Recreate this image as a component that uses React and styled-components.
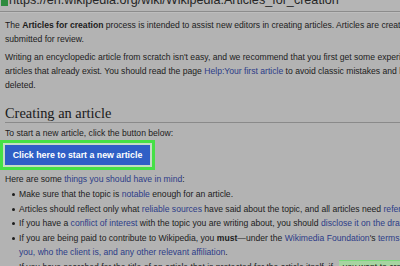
import styled, { createGlobalStyle } from "styled-components";

const Global = createGlobalStyle`
  html, body {
    margin: 0;
    padding: 0;
    background: #b3b3b3;
    overflow: hidden;
  }
  body {
    width: 400px;
    height: 266px;
    font-family: "Liberation Sans", Arial, sans-serif;
    color: #1c1c1c;
  }
`;

const Page = styled.div`
  width: 400px;
  height: 266px;
  overflow: hidden;
`;

const UrlBar = styled.div`
  height: 11px;
  border-bottom: 1px solid #8c8c8c;
  box-shadow: 0 1px 0 #bdbdbd;
  display: flex;
  align-items: flex-start;
  gap: 1px;
  padding-left: 1px;
  overflow: hidden;
  background: #b5b5b5;
`;

const Lock = styled.svg`
  flex: none;
  margin-top: -2px;
`;

const Url = styled.span`
  font-size: 12.6px;
  line-height: 13px;
  margin-top: -6px;
  white-space: nowrap;
  color: #262626;
`;

const Content = styled.div`
  padding-left: 5px;
  width: 600px;
`;

const Para = styled.p`
  margin: ${(p) => p.$top || 0}px 0 0;
  font-size: 8.6px;
  line-height: 14px;
  white-space: nowrap;
`;

const Link = styled.span`
  color: #2c3c88;
`;

const Heading = styled.h2`
  margin: 12px 0 0;
  width: 395px;
  font-family: "Liberation Serif", Georgia, serif;
  font-weight: normal;
  font-size: 14.4px;
  line-height: 18px;
  color: #1a1a1a;
  border-bottom: 1px solid #8a8a8a;
`;

const Highlight = styled.div`
  display: inline-flex;
  margin: 0 0 0 -5px;
  border: 3px solid #45e045;
  padding: 2px;
  background: #c4dcc4;
`;

const Button = styled.div`
  width: 145px;
  height: 20px;
  background: #2f5fc6;
  color: #fff;
  font-weight: bold;
  font-size: 8.8px;
  display: flex;
  align-items: center;
  justify-content: center;
  white-space: nowrap;
`;

const List = styled.ul`
  margin: 1px 0 0;
  padding: 0 0 0 14px;
  list-style: none;
`;

const Item = styled.li`
  position: relative;
  font-size: 8.6px;
  line-height: 14.5px;
  white-space: nowrap;
  &::before {
    content: "";
    position: absolute;
    left: -7px;
    top: 6px;
    width: 3px;
    height: 3px;
    border-radius: 50%;
    background: #1c1c1c;
  }
`;

const Marked = styled.span`
  display: inline-block;
  margin-left: 6px;
  padding: 0 4px;
  background: #a6d4a0;
  box-shadow: inset 0 1px 0 #7cd87c;
`;

export default function App() {
  return (
    <Page>
      <Global />
      <UrlBar>
        <Lock width="7" height="8" viewBox="0 0 7 8">
          <rect x="0" y="1" width="7" height="7" fill="#2e8b3e" />
        </Lock>
        <Url>https://en.wikipedia.org/wiki/Wikipedia:Articles_for_creation</Url>
      </UrlBar>
      <Content>
        <Para $top={6}>
          The <b>Articles for creation</b> process is intended to assist new editors in creating articles. Articles are created and
          <br />
          submitted for review.
        </Para>
        <Para $top={4}>
          Writing an encyclopedic article from scratch isn't easy, and we recommend that you first get some experience editing existing
          <br />
          articles that already exist. You should read the page <Link>Help:Your first article</Link> to avoid classic mistakes and having your article
          <br />
          deleted.
        </Para>
        <Heading>Creating an article</Heading>
        <Para $top={3}>To start a new article, click the button below:</Para>
        <Highlight>
          <Button>Click here to start a new article</Button>
        </Highlight>
        <Para $top={2}>
          Here are some <Link>things you should have in mind</Link>:
        </Para>
        <List>
          <Item>
            Make sure that the topic is <Link>notable</Link> enough for an article.
          </Item>
          <Item>
            Articles should reflect only what <Link>reliable sources</Link> have said about the topic, and all articles need <Link>references</Link>.
          </Item>
          <Item>
            If you have a <Link>conflict of interest</Link> with the topic you are writing about, you should <Link>disclose it on the draft's talk page</Link>.
          </Item>
          <Item>
            If you are being paid to contribute to Wikipedia, you <b>must</b>—under the <Link>Wikimedia Foundation</Link>'s <Link>terms of use</Link>—disclose who is paying
            <br />
            <Link>you, who the client is, and any other relevant affiliation</Link>.
          </Item>
          <Item>
            If you have searched for the title of an article that is protected for the article itself, if
            <Marked>you want to create it anyway</Marked>
          </Item>
        </List>
      </Content>
    </Page>
  );
}
